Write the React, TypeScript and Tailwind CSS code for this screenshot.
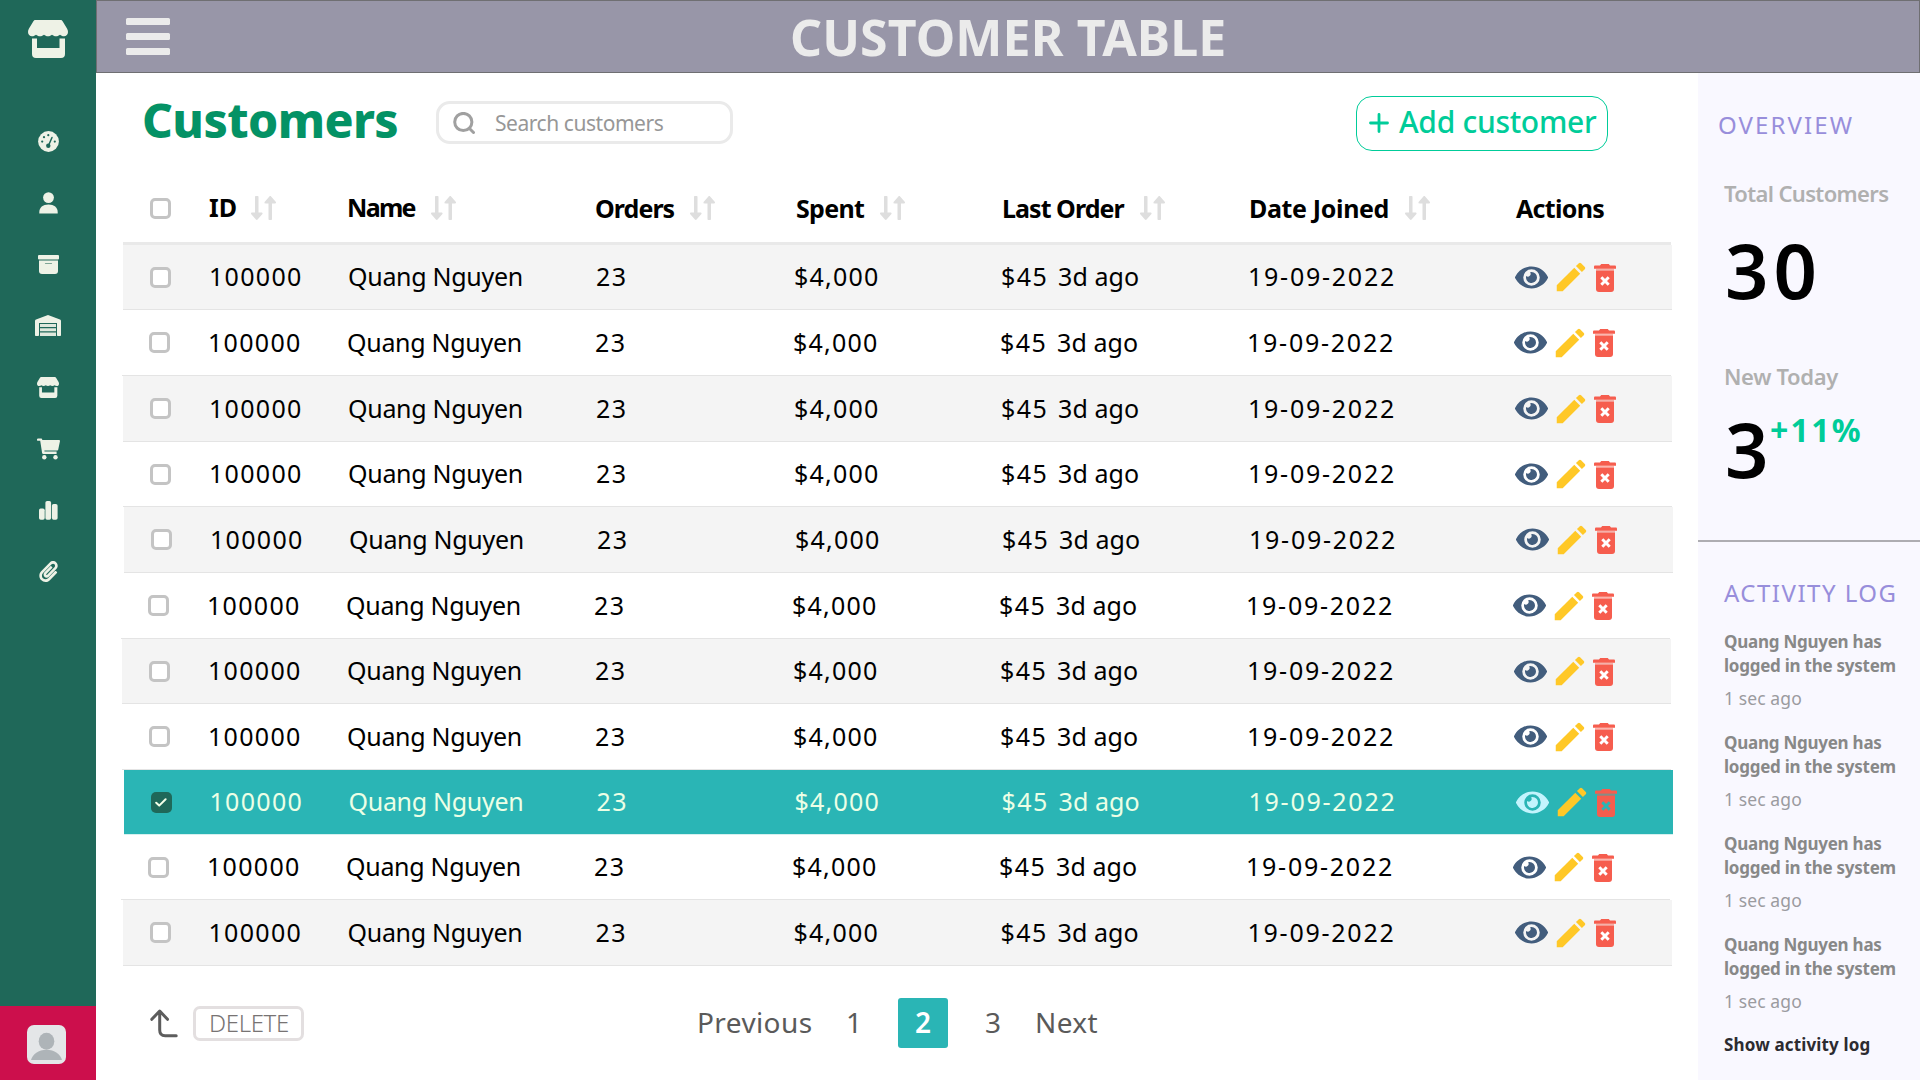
import type { ReactNode } from "react";
import { FaEye, FaPaperclip } from "react-icons/fa";
import { MdEdit } from "react-icons/md";

function StoreIcon({ className }: { className: string }) {
  return (
    <svg viewBox="0 0 40 38" className={className} fill="currentColor">
      <path d="M7.5 0h25c1 0 1.600.4 2.100 1.200L39 8.500c.7 1.300 1 2.400 1 3.500 0 2.400-1.700 4.200-4 4.200-1.700 0-3-.6-4-1.500-1 .9-2.400 1.500-4 1.500s-3-.6-4-1.500c-1 .9-2.400 1.500-4 1.500s-3-.6-4-1.500c-1 .9-2.400 1.500-4 1.500s-3-.6-4-1.500c-1 .9-2.300 1.500-4 1.500-2.300 0-4-1.800-4-4.200 0-1.100.3-2.200 1-3.500L5.400 1.200C5.900.4 6.500 0 7.500 0z" />
      <path d="M4 18.600h5V28h22.500v-9.400H37V34a4 4 0 0 1-4 4H8a4 4 0 0 1-4-4z" />
    </svg>
  );
}

function GaugeIcon() {
  return (
    <svg viewBox="0 0 21 21" className="h-[21px] w-[21px]">
      <circle cx="10.500" cy="10.500" r="10.400" fill="currentColor" />
      <g fill="#1f6859">
        <circle cx="4.200" cy="10.600" r="1.100" />
        <circle cx="6" cy="6.200" r="1.100" />
        <circle cx="10.300" cy="4.200" r="1.100" />
        <circle cx="16.800" cy="10.600" r="1.100" />
        <circle cx="10.300" cy="14.800" r="2.200" />
      </g>
      <path d="M10.500 14.500 14 6.500" stroke="#1f6859" strokeWidth="1.500" strokeLinecap="round" />
    </svg>
  );
}

function PersonIcon() {
  return (
    <svg viewBox="0 0 19 22" className="h-[22px] w-[19px]" fill="currentColor">
      <circle cx="9.500" cy="5.600" r="5.400" />
      <path d="M.3 21.500V20c0-4.500 3.500-7.500 9.200-7.500s9.200 3 9.200 7.500v1.500z" />
    </svg>
  );
}

function ArchiveIcon() {
  return (
    <svg viewBox="0 0 21 19" className="h-[19px] w-[21px]" fill="currentColor">
      <rect width="21" height="4.400" rx="1" />
      <path d="M1 5.400h19V16a3 3 0 0 1-3 3H4a3 3 0 0 1-3-3z" />
      <path d="M7.500 8.500h6" stroke="#7fa596" strokeWidth="1.200" strokeLinecap="round" />
    </svg>
  );
}

function WarehouseIcon() {
  return (
    <svg viewBox="0 0 26 21" className="h-[21px] w-[26px]" fill="currentColor">
      <path d="M13 0 25 4.600c.6.3 1 .8 1 1.500V20c0 .6-.4 1-1 1h-2c-.6 0-1-.4-1-1V8H4v12c0 .6-.4 1-1 1H1c-.6 0-1-.4-1-1V6.100c0-.7.4-1.200 1-1.500z" />
      <path d="M5 9h16v3H5zM5 13.200h16v3H5zM5 17.400h16V21H5z" opacity=".93" />
    </svg>
  );
}

function CartIcon() {
  return (
    <svg viewBox="0 0 23 22" className="h-[22px] w-[23px]" fill="currentColor">
      <path d="M1 .6h3.300c.5 0 .8.300.9.800l.1.600h16.800c.6 0 1 .5.900 1.100l-1.800 8.700c-.1.500-.5.800-1 .8H7.400l.1.900h12.100v2.600H6.200c-.6 0-1-.4-1.100-1L3.200 2.800H1A1.100 1.100 0 0 1 1 .6z" />
      <circle cx="7.300" cy="19.300" r="2.200" />
      <circle cx="18.500" cy="19.300" r="2.200" />
    </svg>
  );
}

function BarsIcon() {
  return (
    <svg viewBox="0 0 19 19" className="h-[19px] w-[19px]" fill="currentColor">
      <rect x="0" y="7.500" width="5.700" height="11.300" rx="1.700" />
      <rect x="6.400" y="0" width="5.700" height="18.800" rx="1.700" />
      <rect x="12.900" y="3" width="5.700" height="15.800" rx="1.700" />
    </svg>
  );
}

function SortIcon() {
  return (
    <svg viewBox="0 0 25 24" className="h-6 w-[25px] shrink-0" fill="#dedede">
      <path d="M4 1c0-.6.400-1 1-1h1.500c.6 0 1 .4 1 1v15.500h3c1 0 1.400 1 .7 1.700l-4.600 5.300c-.5.600-1.200.6-1.700 0L.3 18.200c-.6-.7-.2-1.700.7-1.700h3z" />
      <path d="M17.500 23c0 .6.400 1 1 1H20c.6 0 1-.4 1-1V7.500h3c1 0 1.300-1 .7-1.700L20.100.5c-.5-.6-1.200-.6-1.700 0l-4.600 5.300c-.7.700-.3 1.700.7 1.700h3z" />
    </svg>
  );
}

function TrashIcon({ selected }: { selected?: boolean }) {
  return (
    <svg viewBox="0 0 22 28" className="h-7 w-[22px]">
      <g fill="#f65d4e">
        <path d="M7.200 0h7.600l1.200 1.600h4.800c.7 0 1.200.5 1.200 1.200v2H0v-2c0-.7.500-1.200 1.200-1.200H6z" />
        <path d="M2 6.500h18V25a3 3 0 0 1-3 3H5a3 3 0 0 1-3-3z" />
      </g>
      <path d="M2 4.800h18v1.700H2z" fill="#f65d4e" opacity=".45" />
      <path d="m7.300 13.200 7.400 7.600m0-7.600-7.400 7.600" stroke={selected ? "#2ab5b5" : "#fff"} strokeWidth="2.900" />
    </svg>
  );
}

function Checkbox({ checked }: { checked?: boolean }) {
  if (checked) {
    return (
      <span className="flex h-[21px] w-[21px] items-center justify-center rounded-[5px] bg-[#1f6859]">
        <svg viewBox="0 0 12 9" className="h-[9px] w-3" fill="none" stroke="#f4ffe8" strokeWidth="2" strokeLinecap="round" strokeLinejoin="round">
          <path d="M1.200 4.800 4.200 7.600 10.600 1.200" />
        </svg>
      </span>
    );
  }
  return <span className="block h-[21px] w-[21px] rounded-[5px] border-[3px] border-[#c4c4c4] bg-white" />;
}

const navIcons: { name: string; icon: ReactNode }[] = [
  { name: "dashboard", icon: <GaugeIcon /> },
  { name: "customers", icon: <PersonIcon /> },
  { name: "products", icon: <ArchiveIcon /> },
  { name: "warehouse", icon: <WarehouseIcon /> },
  { name: "store", icon: <StoreIcon className="h-[21px] w-[22px]" /> },
  { name: "cart", icon: <CartIcon /> },
  { name: "reports", icon: <BarsIcon /> },
  { name: "attachments", icon: <FaPaperclip className="h-[21px] w-[19px]" /> },
];

const grid = "grid grid-cols-[59px_138px_248px_199px_207px_247px_266px_159px] items-center pl-[27px]";

const headers = [
  { label: "ID", width: "w-[42px]", text: "pb-[3px]" },
  { label: "Name", width: "w-[84px]", text: "pb-[3px] tracking-[-1.700px]" },
  { label: "Orders", width: "w-[95px]", text: "tracking-[-0.950px]" },
  { label: "Spent", width: "w-[86px]", text: "pl-0.5 tracking-[-0.700px]" },
  { label: "Last Order", width: "w-[139px]", text: "pl-px tracking-[-0.950px]" },
  { label: "Date Joined", width: "w-[157px]", text: "pl-px tracking-[-0.350px]" },
];

const rows = [
  { id: 1, height: "h-[65px]", shift: "" },
  { id: 2, height: "h-[66px]", shift: "-ml-px" },
  { id: 3, height: "h-[66px]", shift: "" },
  { id: 4, height: "h-[65px]", shift: "" },
  { id: 5, height: "h-[66px]", shift: "ml-px" },
  { id: 6, height: "h-[66px]", shift: "-ml-0.5" },
  { id: 7, height: "h-[65px]", shift: "-ml-px" },
  { id: 8, height: "h-[66px]", shift: "-ml-px" },
  { id: 9, height: "h-[65px]", shift: "ml-[0.500px]", selected: true },
  { id: 10, height: "h-[65px]", shift: "-ml-0.5" },
  { id: 11, height: "h-[66px]", shift: "-ml-[0.500px]" },
];

function Sidebar() {
  return (
    <aside className="flex w-24 shrink-0 flex-col bg-[#1f6859] text-[#eef2e6]">
      <div className="flex h-[110.500px] justify-center pt-5">
        <StoreIcon className="h-[38px] w-10" />
      </div>
      <nav className="flex flex-col">
        {navIcons.map((n) => (
          <a key={n.name} className="flex h-[61.500px] items-center justify-center">
            {n.icon}
          </a>
        ))}
      </nav>
      <div className="mt-auto h-[74px] bg-[#cc0f4c] pt-[19px] pl-[27px]">
        <svg viewBox="0 0 39 39" className="h-[39px] w-[39px]">
          <rect width="39" height="39" rx="7" fill="#e4e6e8" />
          <ellipse cx="19.500" cy="16.200" rx="7.800" ry="8.500" fill="#aeb4b8" />
          <path d="M4 35c1.500-6 7.500-10.300 15.500-10.300S33.500 29 35 35z" fill="#aeb4b8" />
        </svg>
      </div>
    </aside>
  );
}

function TopBar() {
  return (
    <header className="flex h-[73px] shrink-0 items-center border border-[#6f6f72] bg-[#9896a8]">
      <button className="mb-px ml-[29px] flex w-11 flex-col gap-2">
        <span className="h-[7px] rounded-[1.500px] bg-[#ebebeb]" />
        <span className="h-[7px] rounded-[1.500px] bg-[#ebebeb]" />
        <span className="h-[7px] rounded-[1.500px] bg-[#ebebeb]" />
      </button>
      <h1 className="ml-[620px] text-[50px] leading-[70px] font-bold whitespace-nowrap tracking-[0.100px] text-[#ebebeb]">CUSTOMER TABLE</h1>
    </header>
  );
}

function Toolbar() {
  return (
    <div className="flex h-[101px] items-start pl-[46px]">
      <h2 className="mt-[17px] w-[294px] text-[48px] leading-[60px] font-extrabold tracking-[-0.600px] text-[#049265]">Customers</h2>
      <div className="mt-7 flex h-[43px] w-[297px] items-center rounded-[14px] border-[3px] border-[#eaeaea] pl-[14px]">
        <svg viewBox="0 0 22 22" className="h-[22px] w-[22px]" fill="none" stroke="#a0a0a0" strokeWidth="3" strokeLinecap="round">
          <circle cx="10.300" cy="10" r="8.600" />
          <path d="m16.500 16.500 4 4" />
        </svg>
        <span className="ml-5 text-[21px] leading-[30px] tracking-[-0.450px] text-[#979797]">Search customers</span>
      </div>
      <button className="mt-[23px] ml-[623px] flex h-[55px] w-[252px] items-center rounded-[16px] border border-[#00cc99] pb-[3px] pl-3 text-[30px] leading-[40px] font-medium whitespace-nowrap text-[#00cc99]">
        <svg viewBox="0 0 20 20" className="mt-px mr-[10px] h-5 w-5" stroke="currentColor" strokeWidth="2.800" strokeLinecap="round">
          <path d="M10 1.500v17M1.500 10h17" />
        </svg>
        <span className="tracking-[-0.300px]">Add customer</span>
      </button>
    </div>
  );
}

function Table() {
  return (
    <div className="ml-[27px] w-[1550px]">
      <div className={`${grid} h-[71px] w-[1548px] border-b-[3px] border-[#e9e9e9] text-[25px] leading-[34px] font-bold text-black`}>
        <Checkbox />
        {headers.map((h) => (
          <div key={h.label} className="flex items-center">
            <span className={`${h.width} ${h.text} whitespace-nowrap`}>{h.label}</span>
            <SortIcon />
          </div>
        ))}
        <span className="pl-0.5 tracking-[-0.700px]">Actions</span>
      </div>
      {rows.map((r) => (
        <div
          key={r.id}
          className={`${grid} ${r.height} ${r.shift} w-[1549px] border-b text-[25px] leading-[34px] ${
            r.selected ? "border-[#d5f0ef] bg-[#2ab5b5] text-[#ecffe6]" : r.id % 2 ? "border-[#e4e4e4] bg-[#f4f4f4] text-black" : "border-[#e4e4e4] bg-white text-black"
          }`}
        >
          <Checkbox checked={r.selected} />
          <span className="pb-0.5 tracking-[1.300px]">100000</span>
          <span className="pb-0.5 pl-px tracking-[-0.300px]">Quang Nguyen</span>
          <span className="pb-0.5 pl-px tracking-[1.500px]">23</span>
          <span className="pb-0.5 tracking-[1.200px]">$4,000</span>
          <span className="flex pb-0.5">
            <span className="w-[57px] tracking-[1.500px]">$45</span>
            <span className="tracking-[0.100px]">3d ago</span>
          </span>
          <span className="pb-0.5 tracking-[1.750px]">19-09-2022</span>
          <span className="flex items-center pl-px">
            <FaEye className={`h-[33px] w-[33px] ${r.selected ? "text-[#c3f4fd]" : "text-[#425d7d]"}`} />
            <MdEdit className="ml-1 h-[38px] w-[38px] text-[#ffc827]" />
            <span className="ml-1 pt-px">
              <TrashIcon selected={r.selected} />
            </span>
          </span>
        </div>
      ))}
    </div>
  );
}

function TableFooter() {
  return (
    <div className="flex h-[114px] items-center pl-[54px] text-[28px] leading-[40px] text-[#5a5a5a]">
      <svg viewBox="0 0 28 29" className="h-[29px] w-7" fill="none" stroke="#5d5d5d" strokeWidth="3" strokeLinecap="round" strokeLinejoin="round">
        <path d="M1.800 10.300 9.700 2l7.800 8.300M9.700 2.500V21c0 4 2 5.800 5.500 5.800h11" />
      </svg>
      <button className="ml-[15px] flex h-[35px] w-[111px] items-center justify-center rounded-[7px] border-[3px] border-[#e3dfe0] pl-px text-[24px] leading-[28px] font-light tracking-[-0.350px] text-[#777373]">DELETE</button>
      <span className="mb-[3px] ml-[393px] w-[149px] tracking-[0.400px]">Previous</span>
      <span className="mb-[3px] w-[52px]">1</span>
      <span className="flex h-[50px] w-[50px] items-center justify-center rounded-[3px] bg-[#2ab5b5] pb-[3px] font-semibold text-white">2</span>
      <span className="mb-[3px] ml-[37px] w-[50px]">3</span>
      <span className="mb-[3px] tracking-[0.400px]">Next</span>
    </div>
  );
}

function SidePanel() {
  return (
    <aside className="flex w-[222px] shrink-0 flex-col bg-[#f9f8ff] pt-9">
      <h3 className="pl-5 text-[24px] leading-8 tracking-[2.100px] text-[#988edb]">OVERVIEW</h3>
      <div className="mt-[37px] pl-[26px] text-[22px] leading-[30px] font-semibold tracking-[-0.650px] whitespace-nowrap text-[#b0b0b0]">Total Customers</div>
      <div className="mt-[22px] pl-[27px] text-[76px] leading-[80px] font-semibold tracking-[5px] text-black">30</div>
      <div className="mt-[51px] pl-[26px] text-[22px] leading-[30px] font-semibold tracking-[-0.350px] text-[#b0b0b0]">New Today</div>
      <div className="mt-[18px] flex pl-[27px]">
        <span className="w-[45px] text-[76px] leading-[80px] font-semibold text-black">3</span>
        <span className="mt-[5px] text-[32px] leading-8 font-bold tracking-[2.300px] text-[#00cc99]">+11%</span>
      </div>
      <div className="mt-[51px] h-0.5 bg-[#aeadb2]" />
      <h3 className="mt-[35px] pl-[26px] text-[24px] leading-8 tracking-[1.500px] whitespace-nowrap text-[#988edb]">ACTIVITY LOG</h3>
      <div className="mt-[21px] flex flex-col gap-[21px] pl-[26px] text-[17px] leading-6 whitespace-nowrap">
        {[1, 2, 3, 4].map((n) => (
          <div key={n}>
            <div className="font-bold tracking-[-0.250px] text-[#888888]">
              Quang Nguyen has
              <br />
              logged in the system
            </div>
            <div className="mt-2 text-[17.500px] tracking-[0.100px] text-[#9b9b9f]">1 sec ago</div>
          </div>
        ))}
      </div>
      <a className="mt-5 pl-[26px] text-[17px] leading-6 font-bold tracking-[0.150px] text-[#2c2b30]">Show activity log</a>
    </aside>
  );
}

export default function App() {
  return (
    <div className="flex h-[1080px] w-[1920px] overflow-hidden bg-white font-['Noto_Sans',sans-serif]">
      <Sidebar />
      <div className="flex w-[1824px] flex-col">
        <TopBar />
        <div className="flex flex-1">
          <main className="w-[1602px] shrink-0">
            <Toolbar />
            <Table />
            <TableFooter />
          </main>
          <SidePanel />
        </div>
      </div>
    </div>
  );
}
